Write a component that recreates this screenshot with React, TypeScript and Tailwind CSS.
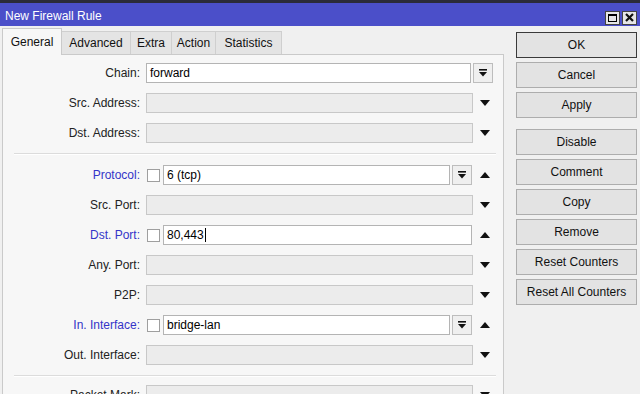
import React from "react";

const DownArrow = () => (
  <svg width="10" height="6" viewBox="0 0 10 6"><path d="M0 0 H10 L5 6 Z" fill="#111" /></svg>
);
const UpArrow = () => (
  <svg width="10" height="6" viewBox="0 0 10 6"><path d="M0 6 H10 L5 0 Z" fill="#111" /></svg>
);

const DropBtn = () => (
  <div className="w-[20px] h-[20px] shrink-0 border border-[#bdbdbd] bg-[#efefef] flex items-center justify-center">
    <svg width="8" height="8" viewBox="0 0 8 8">
      <rect x="0" y="0" width="8" height="1.6" fill="#111" />
      <path d="M0 3 H8 L4 7.5 Z" fill="#111" />
    </svg>
  </div>
);

const Check = () => (
  <div className="ml-[1px] w-[13px] h-[13px] shrink-0 bg-white border border-[#9f9f9f]" />
);

const Input = ({ value, active, w, cursor }: { value?: string; active?: boolean; w: string; cursor?: boolean }) => (
  <div
    className={
      "h-[20px] shrink-0 flex items-center pl-[3px] text-[12px] text-black border " +
      w +
      (active ? " bg-white border-[#b4b4b4]" : " bg-[#ececec] border-[#c8c8c8]")
    }
  >
    {value}
    {cursor && <span className="inline-block w-[1px] h-[14px] bg-black ml-[1px]" />}
  </div>
);

type RowProps = {
  label: string;
  blue?: boolean;
  children: React.ReactNode;
  slot?: React.ReactNode;
};
const Row = ({ label, blue, children, slot }: RowProps) => (
  <div className="flex items-center h-[20px]">
    <div className={"w-[137px] text-right text-[12px] " + (blue ? "text-[#3434c8]" : "text-[#222]")}>{label}</div>
    <div className="ml-[6px] w-[327px] flex items-center">{children}</div>
    <div className="w-[24px] flex items-center justify-center">{slot}</div>
  </div>
);

const Sep = ({ cls }: { cls: string }) => (
  <div className={"ml-[11px] w-[482px] h-[2px] border-t border-[#dcdcdc] border-b-white border-b " + cls} />
);

const Btn = ({ label, ok, cls }: { label: string; ok?: boolean; cls?: string }) => (
  <div
    className={
      "h-[26px] w-[121px] flex items-center justify-center text-[12px] text-[#111] bg-[#e3e3e3] border " +
      (ok ? "border-[#3a3a3a]" : "border-[#adadad]") +
      " " +
      (cls || "")
    }
  >
    {label}
  </div>
);

export default function App() {
  const tabs = [
    { t: "Advanced", w: "w-[69px]" },
    { t: "Extra", w: "w-[41px]" },
    { t: "Action", w: "w-[44px]" },
    { t: "Statistics", w: "w-[66px]" },
  ];
  return (
    <div
      className="w-[640px] h-[394px] overflow-hidden bg-[#f0f0f0]"
      style={{ fontFamily: '"Liberation Sans", Arial, sans-serif' }}
    >
      <div className="h-[3px] bg-[#2b2b3a]" />
      <div className="h-[23px] bg-[#4b4fc9] flex items-center pl-[5px] pr-[3px]">
        <div className="text-white text-[12px] pt-[3px]">New Firewall Rule</div>
        <div className="ml-auto flex gap-[2px] pt-[6px]">
          <div className="w-[15px] h-[14px] bg-[#e6e6e6] border border-[#444] flex items-center justify-center">
            <div className="w-[9px] h-[8px] border border-black border-t-2" />
          </div>
          <div className="w-[15px] h-[14px] bg-[#e6e6e6] border border-[#444] flex items-center justify-center">
            <svg width="9" height="9" viewBox="0 0 9 9">
              <path d="M1 1 L8 8 M8 1 L1 8" stroke="#111" strokeWidth="2.2" />
            </svg>
          </div>
        </div>
      </div>
      <div className="flex">
        <div className="pl-[2px] w-[504px]">
          <div className="flex items-end h-[28px]">
            <div className="relative z-10 -mb-px w-[60px] h-[27px] bg-[#f7f7f7] border border-b-0 border-[#cacaca] flex items-center justify-center text-[12px] text-[#111]">
              General
            </div>
            {tabs.map((tb) => (
              <div
                key={tb.t}
                className={
                  "h-[23px] bg-[#e4e4e4] border border-b-0 border-l-0 border-[#cfcfcf] flex items-center justify-center text-[12px] text-[#111] " +
                  tb.w
                }
              >
                {tb.t}
              </div>
            ))}
          </div>
          <div className="w-[502px] h-[400px] border border-[#cacaca] bg-[#f7f7f7] pt-[8px]">
            <div className="flex flex-col gap-[10px]">
              <Row label="Chain:" slot={<div className="w-[24px] flex"><DropBtn /></div>}>
                <Input value="forward" active w="w-[325px]" />
              </Row>
              <Row label="Src. Address:" slot={<DownArrow />}>
                <Input w="w-[327px]" />
              </Row>
              <Row label="Dst. Address:" slot={<DownArrow />}>
                <Input w="w-[327px]" />
              </Row>
            </div>
            <Sep cls="mt-[10px] mb-[10px]" />
            <div className="flex flex-col gap-[10px]">
              <Row label="Protocol:" blue slot={<UpArrow />}>
                <Check />
                <div className="ml-[3px]" />
                <Input value="6 (tcp)" active w="w-[287px]" />
                <div className="ml-[2px]" />
                <DropBtn />
              </Row>
              <Row label="Src. Port:" slot={<DownArrow />}>
                <Input w="w-[327px]" />
              </Row>
              <Row label="Dst. Port:" blue slot={<UpArrow />}>
                <Check />
                <div className="ml-[3px]" />
                <Input value="80,443" active cursor w="w-[309px]" />
              </Row>
              <Row label="Any. Port:" slot={<DownArrow />}>
                <Input w="w-[327px]" />
              </Row>
              <Row label="P2P:" slot={<DownArrow />}>
                <Input w="w-[327px]" />
              </Row>
              <Row label="In. Interface:" blue slot={<UpArrow />}>
                <Check />
                <div className="ml-[3px]" />
                <Input value="bridge-lan" active w="w-[287px]" />
                <div className="ml-[2px]" />
                <DropBtn />
              </Row>
              <Row label="Out. Interface:" slot={<DownArrow />}>
                <Input w="w-[327px]" />
              </Row>
            </div>
            <Sep cls="mt-[10px] mb-[8px]" />
            <Row label="Packet Mark:" slot={<DownArrow />}>
              <Input w="w-[327px]" />
            </Row>
          </div>
        </div>
        <div className="ml-[12px] pt-[6px] flex flex-col gap-[4px]">
          <Btn label="OK" ok />
          <Btn label="Cancel" />
          <Btn label="Apply" />
          <Btn label="Disable" cls="mt-[7px]" />
          <Btn label="Comment" />
          <Btn label="Copy" />
          <Btn label="Remove" />
          <Btn label="Reset Counters" />
          <Btn label="Reset All Counters" />
        </div>
      </div>
    </div>
  );
}
